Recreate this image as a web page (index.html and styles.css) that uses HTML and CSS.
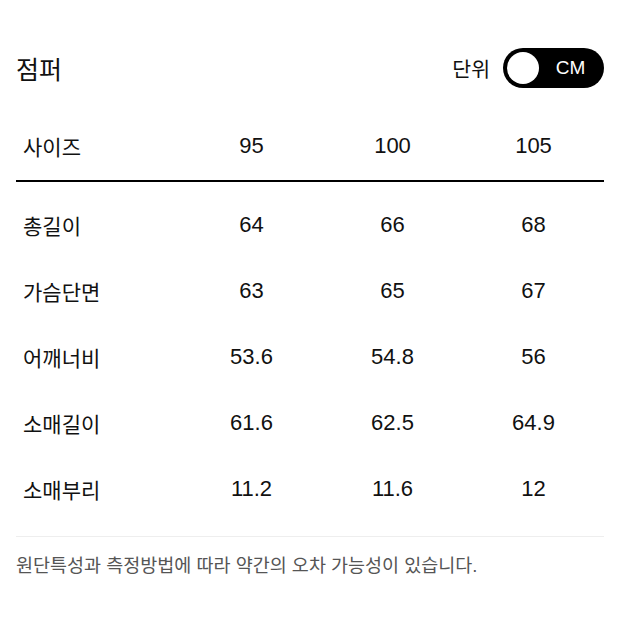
FILE: index.html
```html
<!DOCTYPE html>
<html lang="ko">
<head>
<meta charset="utf-8">
<link rel="stylesheet" href="styles.css">
</head>
<body>
<div class="page">
  <div class="top">
    <h1 class="title">점퍼</h1>
    <div class="unit">
      <span class="unit-label">단위</span>
      <div class="toggle"><span class="knob"></span><span class="toggle-text">CM</span></div>
    </div>
  </div>
  <div class="table">
    <div class="row head">
      <div class="label">사이즈</div><div class="cell">95</div><div class="cell">100</div><div class="cell">105</div>
    </div>
    <div class="body">
      <div class="row"><div class="label">총길이</div><div class="cell">64</div><div class="cell">66</div><div class="cell">68</div></div>
      <div class="row"><div class="label">가슴단면</div><div class="cell">63</div><div class="cell">65</div><div class="cell">67</div></div>
      <div class="row"><div class="label">어깨너비</div><div class="cell">53.6</div><div class="cell">54.8</div><div class="cell">56</div></div>
      <div class="row"><div class="label">소매길이</div><div class="cell">61.6</div><div class="cell">62.5</div><div class="cell">64.9</div></div>
      <div class="row"><div class="label">소매부리</div><div class="cell">11.2</div><div class="cell">11.6</div><div class="cell">12</div></div>
    </div>
  </div>
  <p class="note">원단특성과 측정방법에 따라 약간의 오차 가능성이 있습니다.</p>
</div>
</body>
</html>
```
FILE: styles.css
```css
* { box-sizing: border-box; }
body {
  margin: 0;
  background: #fff;
  color: #111;
  font-family: "Liberation Sans", "Noto Sans CJK KR", sans-serif;
}
.page { padding: 48px 16px 0; }
.top {
  display: flex;
  align-items: center;
  justify-content: space-between;
  height: 40px;
}
.title {
  margin: 0;
  font-size: 25px;
  font-weight: 400;
}
.unit { display: flex; align-items: center; gap: 13px; }
.unit-label { font-size: 20.5px; }
.toggle {
  width: 101px;
  height: 40px;
  border-radius: 20px;
  background: #000;
  display: flex;
  align-items: center;
  padding: 0 4px;
}
.knob {
  width: 32px;
  height: 32px;
  border-radius: 50%;
  background: #fff;
  flex: none;
}
.toggle-text {
  flex: 1;
  text-align: center;
  color: #fff;
  font-size: 19px;
  padding-left: 2px;
}
.table { margin-top: 26px; }
.row {
  display: grid;
  grid-template-columns: 165px 141px 141px 141px;
  height: 66px;
  align-items: center;
  font-size: 22px;
}
.head { border-bottom: 2px solid #000; height: 68px; padding-bottom: 2px; }
.body { padding-top: 10px; padding-bottom: 14px; border-bottom: 1px solid #eee; }
.label { padding-left: 7px; font-size: 21px; }
.cell { text-align: center; }
.note {
  margin: 16px 0 0;
  font-size: 18.5px;
  line-height: 26px;
  color: #555;
}
```
